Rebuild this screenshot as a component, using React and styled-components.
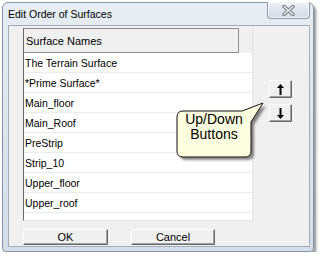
import styled, { createGlobalStyle } from 'styled-components';

const GlobalStyle = createGlobalStyle`
    html, body {
        margin: 0;
        background: #fff;
    }
`;

const Page = styled.div`
    padding: 2px 0 0 2px;
    font-family: "Liberation Sans", Arial, sans-serif;
`;

const Window = styled.div`
    position: relative;
    box-sizing: border-box;
    width: 312px;
    height: 250px;
    display: flex;
    flex-direction: column;
    padding: 0 3px 4px 5px;
    border: 1px solid #8796a7;
    border-radius: 6px 6px 4px 4px;
    background: linear-gradient(180deg, #e6edf4 0%, #dbe4ee 60%, #d3dee9 100%);
    box-shadow: 2px 3px 3px rgba(0, 0, 0, 0.45);
`;

const TitleBar = styled.div`
    height: 22px;
    display: flex;
    align-items: flex-start;
`;

const Title = styled.span`
    padding: 5px 0 0 0;
    font-size: 10.5px;
    color: #000;
`;

const CloseButton = styled.div`
    margin: -1px 0 0 auto;
    width: 43px;
    height: 17px;
    box-sizing: border-box;
    display: flex;
    align-items: center;
    justify-content: center;
    border: 1px solid #8d9bab;
    border-top: none;
    border-radius: 0 0 4px 4px;
    background: linear-gradient(180deg, #eef2f7 0%, #dde5ee 50%, #d2dce7 100%);
    box-shadow: inset 0 0 0 1px rgba(255, 255, 255, 0.7);
`;

const Client = styled.div`
    position: relative;
    flex: 1;
    display: flex;
    flex-direction: column;
    padding: 2px 0 0 14px;
    background: #f0f0f0;
    border: 1px solid #a3adb9;
`;

const Body = styled.div`
    display: flex;
`;

const List = styled.div`
    box-sizing: border-box;
    width: 230px;
    height: 193px;
    display: flex;
    flex-direction: column;
    background: #fff;
    border: 1px solid;
    border-color: #7d7d7d #e3e3e3 #e3e3e3 #6b6b6b;
    border-top: none;
`;

const HeaderRow = styled.div`
    display: flex;
    height: 25px;
    background: #f0f0f0;
`;

const HeaderCell = styled.div`
    box-sizing: border-box;
    width: 215px;
    display: flex;
    align-items: center;
    padding-left: 2px;
    font-size: 11px;
    color: #000;
    background: #f0f0f0;
    border: 1px solid #8e8e8e;
    border-left: none;
`;

const Row = styled.div`
    box-sizing: border-box;
    height: 20px;
    display: flex;
    align-items: center;
    padding-left: 1px;
    font-size: 10.5px;
    color: #000;
    border-bottom: 1px solid #ececec;
`;

const SideButtons = styled.div`
    display: flex;
    flex-direction: column;
    gap: 6px;
    margin-left: 16px;
    padding-top: 52px;
`;

const ClassicButton = styled.button`
    box-sizing: border-box;
    width: ${p => p.$w}px;
    height: ${p => p.$h}px;
    padding: 0;
    display: flex;
    align-items: center;
    justify-content: center;
    font-family: "Liberation Sans", Arial, sans-serif;
    font-size: 11px;
    color: #000;
    background: #f0f0f0;
    border: 1px solid;
    border-color: #fdfdfd #696969 #696969 #fdfdfd;
    box-shadow: inset -1px -1px 0 #a0a0a0;
`;

const Footer = styled.div`
    display: flex;
    gap: 23px;
    margin-top: 8px;
`;

const Callout = styled.div`
    position: absolute;
    left: 163px;
    top: 74px;
    width: 96px;
    height: 62px;
`;

const CalloutShape = styled.svg`
    position: absolute;
    inset: 0;
`;

const CalloutText = styled.div`
    position: relative;
    width: 74px;
    margin: 12px 0 0 5px;
    text-align: center;
    font-size: 14px;
    line-height: 15px;
    color: #000;
`;

const Arrow = ({ down }) => (
    <svg width="7" height="11" viewBox="0 0 7 11">
        <g transform={down ? 'rotate(180 3.5 5.5)' : undefined}>
            <path d="M3.5 0 L7 4 H0 Z" fill="#000" />
            <rect x="2.5" y="3" width="2" height="8" fill="#000" />
        </g>
    </svg>
);

const CloseGlyph = () => (
    <svg width="13" height="11" viewBox="0 0 13 11">
        <path d="M2 1.5 L11 9.5 M11 1.5 L2 9.5" stroke="#6f7780" strokeWidth="3.4" strokeLinecap="round" />
        <path d="M2 1.5 L11 9.5 M11 1.5 L2 9.5" stroke="#f4f6f8" strokeWidth="1.4" strokeLinecap="round" />
    </svg>
);

const bubblePath = 'M11 11 H70 L91 3 L79 22 V51 Q79 57 73 57 H11 Q5 57 5 51 V17 Q5 11 11 11 Z';

const surfaces = [
    'The Terrain Surface',
    '*Prime Surface*',
    'Main_floor',
    'Main_Roof',
    'PreStrip',
    'Strip_10',
    'Upper_floor',
    'Upper_roof',
];

const App = () => (
    <Page>
        <GlobalStyle />
        <Window>
            <TitleBar>
                <Title>Edit Order of Surfaces</Title>
                <CloseButton><CloseGlyph /></CloseButton>
            </TitleBar>
            <Client>
                <Body>
                    <List>
                        <HeaderRow>
                            <HeaderCell>Surface Names</HeaderCell>
                        </HeaderRow>
                        {surfaces.map(name => <Row key={name}>{name}</Row>)}
                    </List>
                    <SideButtons>
                        <ClassicButton $w={23} $h={18}><Arrow /></ClassicButton>
                        <ClassicButton $w={23} $h={18}><Arrow down /></ClassicButton>
                    </SideButtons>
                </Body>
                <Footer>
                    <ClassicButton $w={85} $h={16}>OK</ClassicButton>
                    <ClassicButton $w={84} $h={16}>Cancel</ClassicButton>
                </Footer>
                <Callout>
                    <CalloutShape width="96" height="62" viewBox="0 0 96 62">
                        <defs>
                            <filter id="soft" x="-20%" y="-20%" width="140%" height="140%">
                                <feGaussianBlur stdDeviation="1.3" />
                            </filter>
                        </defs>
                        <path d={bubblePath} transform="translate(3 3)" fill="rgba(0,0,0,0.45)" filter="url(#soft)" />
                        <path d={bubblePath} fill="#fdfddf" stroke="#111" strokeWidth="1" />
                    </CalloutShape>
                    <CalloutText>Up/Down<br />Buttons</CalloutText>
                </Callout>
            </Client>
        </Window>
    </Page>
);

export default App;
